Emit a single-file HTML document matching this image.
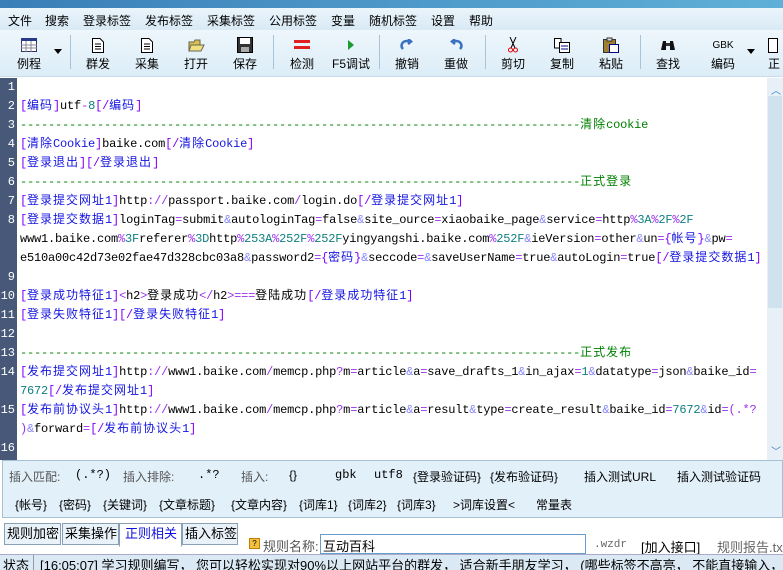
<!DOCTYPE html>
<html><head><meta charset="utf-8"><style>
*{margin:0;padding:0;box-sizing:border-box}
body{width:783px;height:570px;overflow:hidden;background:#fff;font-family:"Liberation Sans","Noto Sans CJK SC",sans-serif;font-size:12px;position:relative}
.title{position:absolute;left:0;top:0;width:783px;height:8px;background:linear-gradient(90deg,#3a7fb8,#5fb0d8)}
.menu{position:absolute;left:0;top:8px;width:783px;height:22px;background:linear-gradient(#eaf4fb,#d9eaf5);font-size:12px}
.menu span{position:absolute;top:4px}
.tb{position:absolute;left:0;top:30px;width:783px;height:47px;background:linear-gradient(#eef6fc,#dcedf7);border-bottom:1px solid #c8dceb}
.btn{position:absolute;top:7px;text-align:center;font-size:12px;width:40px}
.btn .ic{height:16px;margin:0 auto 2px;display:flex;justify-content:center;align-items:center}
.sep{position:absolute;top:5px;width:1px;height:34px;background:#a9c4da}
.gut{position:absolute;left:0;top:78px;width:17px;height:382px;background:#485878}
.ln{position:absolute;right:2px;color:#fff;font-family:"Liberation Mono",monospace;font-size:12px;height:19px;line-height:19px}
.ed{position:absolute;left:20px;top:78px;font-family:"Liberation Mono","Noto Sans CJK SC",monospace;font-size:12px;letter-spacing:-0.2px}
.row{position:absolute;left:0;height:19px;line-height:19px;white-space:pre}
i{font-style:normal;letter-spacing:1px}
.b{color:#8000ff}.t{color:#1515e0}.o{color:#9a30f0}.a{color:#8888ff}.n{color:#108080}.g{color:#008000}
.sb{position:absolute;left:767px;top:78px;width:16px;height:382px;background:#e6f0f6}
.panel{position:absolute;left:2px;top:460px;width:781px;height:58px;background:#e2f0fa;border:1px solid #a8c0d4}
.panel span{position:absolute;font-size:12px}
.tab{position:absolute;top:523px;height:22px;border:1px solid #8aa0b4;background:#e8f2f8;font-size:13px;padding:2px 2px;line-height:16px;white-space:nowrap;overflow:hidden}
.status{position:absolute;left:0;top:554px;width:783px;height:16px;background:#dbe9f4;border-top:1px solid #aac;font-size:13px;white-space:nowrap;overflow:hidden}
</style></head><body>
<div class="title"></div>
<div class="menu">
<span style="left:8px">文件</span><span style="left:45px">搜索</span><span style="left:83px">登录标签</span><span style="left:145px">发布标签</span><span style="left:207px">采集标签</span><span style="left:269px">公用标签</span><span style="left:331px">变量</span><span style="left:369px">随机标签</span><span style="left:431px">设置</span><span style="left:469px">帮助</span>
</div>
<div class="tb">
<div class="btn" style="left:9px"><div class="ic"><svg width="16" height="14"><rect x="0.5" y="0.5" width="15" height="13" fill="#fff" stroke="#336"/><rect x="0" y="0" width="16" height="3" fill="#2a3a8a"/><path d="M0 7H16M0 10H16M5 3V14M10 3V14" stroke="#889"/></svg></div>例程</div>
<div style="position:absolute;left:54px;top:19px;border:4px solid transparent;border-top:5px solid #000"></div>
<div class="sep" style="left:70px"></div>
<div class="btn" style="left:78px"><div class="ic"><svg width="12" height="15"><path d="M.5 .5H8L11.5 4V14.5H.5Z" fill="#fff" stroke="#000"/><path d="M3 6H9M3 8.5H9M3 11H9" stroke="#000"/></svg></div>群发</div>
<div class="btn" style="left:127px"><div class="ic"><svg width="12" height="15"><path d="M.5 .5H8L11.5 4V14.5H.5Z" fill="#fff" stroke="#000"/><path d="M3 6H9M3 8.5H9M3 11H9" stroke="#000"/></svg></div>采集</div>
<div class="btn" style="left:176px"><div class="ic"><svg width="17" height="14"><path d="M1 4H6L7 2H12V13H1Z" fill="#d8c050" stroke="#665"/><path d="M3 7H16L13 13H1Z" fill="#f0e080" stroke="#665"/></svg></div>打开</div>
<div class="btn" style="left:225px"><div class="ic"><svg width="16" height="16"><rect x=".5" y=".5" width="15" height="15" fill="#333" stroke="#000"/><rect x="3" y="1" width="10" height="6" fill="#fff"/><rect x="4" y="10" width="8" height="5" fill="#aaa"/></svg></div>保存</div>
<div class="sep" style="left:273px"></div>
<div class="btn" style="left:282px"><div class="ic"><svg width="16" height="12"><rect y="1" width="16" height="3" fill="#e02020"/><rect y="7" width="16" height="3" fill="#e02020"/></svg></div>检测</div>
<div class="btn" style="left:331px"><div class="ic"><svg width="8" height="12"><path d="M1 1L7 6L1 11Z" fill="#1a9a30"/></svg></div>F5调试</div>
<div class="sep" style="left:379px"></div>
<div class="btn" style="left:387px"><div class="ic"><svg width="14" height="12"><path d="M3 10C0 7 2 2 7 2H10M8 0L11 2.5L8 5" fill="none" stroke="#3a70c0" stroke-width="2.5"/></svg></div>撤销</div>
<div class="btn" style="left:436px"><div class="ic"><svg width="14" height="12"><path d="M11 10C14 7 12 2 7 2H4M6 0L3 2.5L6 5" fill="none" stroke="#3a70c0" stroke-width="2.5"/></svg></div>重做</div>
<div class="sep" style="left:485px"></div>
<div class="btn" style="left:493px"><div class="ic"><svg width="10" height="16"><path d="M2 0L7 11M8 0L3 11" stroke="#000"/><circle cx="2.5" cy="13" r="2" fill="none" stroke="#d00"/><circle cx="7.5" cy="13" r="2" fill="none" stroke="#d00"/></svg></div>剪切</div>
<div class="btn" style="left:542px"><div class="ic"><svg width="16" height="15"><path d="M.5 .5H7V10H.5Z" fill="#fff" stroke="#000"/><path d="M5.5 4.5H15.5V14.5H5.5Z" fill="#fff" stroke="#000"/><path d="M7 8H14M7 11H14" stroke="#008"/></svg></div>复制</div>
<div class="btn" style="left:591px"><div class="ic"><svg width="16" height="16"><rect x=".5" y="2.5" width="12" height="13" fill="#a08030" stroke="#333"/><rect x="4" y="1" width="5" height="3" fill="#ddd" stroke="#333"/><rect x="6.5" y="7.5" width="9" height="8" fill="#fff" stroke="#008"/></svg></div>粘贴</div>
<div class="sep" style="left:640px"></div>
<div class="btn" style="left:648px"><div class="ic"><svg width="16" height="12"><path d="M1 11L3 2H6V11ZM15 11L13 2H10V11Z" fill="#111"/><rect x="6" y="4" width="4" height="3" fill="#333"/></svg></div>查找</div>
<div class="btn" style="left:703px"><div class="ic" style="font-size:10px">GBK</div>编码</div>
<div style="position:absolute;left:747px;top:19px;border:4px solid transparent;border-top:5px solid #000"></div>
<div class="btn" style="left:768px;width:20px;text-align:left"><div class="ic" style="justify-content:flex-start"><svg width="10" height="15"><path d="M.5 .5H9.5V14.5H.5Z" fill="#fff" stroke="#000"/></svg></div>正</div>
</div>
<div class="gut">
<div class="ln" style="top:0">1</div><div class="ln" style="top:19px">2</div><div class="ln" style="top:38px">3</div><div class="ln" style="top:57px">4</div><div class="ln" style="top:76px">5</div><div class="ln" style="top:95px">6</div><div class="ln" style="top:114px">7</div><div class="ln" style="top:133px">8</div><div class="ln" style="top:190px">9</div><div class="ln" style="top:209px">10</div><div class="ln" style="top:228px">11</div><div class="ln" style="top:247px">12</div><div class="ln" style="top:266px">13</div><div class="ln" style="top:285px">14</div><div class="ln" style="top:323px">15</div><div class="ln" style="top:361px">16</div>
</div>
<div class="ed">
<div class="row" style="top:19px"><span class="b">[</span><i class="t">编码</i><span class="b">]</span>utf<span class="o">-</span><span class="n">8</span><span class="b">[/</span><i class="t">编码</i><span class="b">]</span></div>
<div class="row g" style="top:38px">--------------------------------------------------------------------------------<i>清除</i>cookie</div>
<div class="row" style="top:57px"><span class="b">[</span><i class="t">清除</i><span class="t">Cookie</span><span class="b">]</span>baike.com<span class="b">[/</span><i class="t">清除</i><span class="t">Cookie</span><span class="b">]</span></div>
<div class="row" style="top:76px"><span class="b">[</span><i class="t">登录退出</i><span class="b">][/</span><i class="t">登录退出</i><span class="b">]</span></div>
<div class="row g" style="top:95px">--------------------------------------------------------------------------------<i>正式登录</i></div>
<div class="row" style="top:114px"><span class="b">[</span><i class="t">登录提交网址</i><span class="t">1</span><span class="b">]</span>http<span class="o">://</span>passport.baike.com<span class="o">/</span>login.do<span class="b">[/</span><i class="t">登录提交网址</i><span class="t">1</span><span class="b">]</span></div>
<div class="row" style="top:133px"><span class="b">[</span><i class="t">登录提交数据</i><span class="t">1</span><span class="b">]</span>loginTag<span class="o">=</span>submit<span class="a">&amp;</span>autologinTag<span class="o">=</span>false<span class="a">&amp;</span>site_ource<span class="o">=</span>xiaobaike_page<span class="a">&amp;</span>service<span class="o">=</span>http<span class="o">%</span><span class="n">3A</span><span class="o">%</span><span class="n">2F</span><span class="o">%</span><span class="n">2F</span></div>
<div class="row" style="top:152px">www1.baike.com<span class="o">%</span><span class="n">3F</span>referer<span class="o">%</span><span class="n">3D</span>http<span class="o">%</span><span class="n">253A</span><span class="o">%</span><span class="n">252F</span><span class="o">%</span><span class="n">252F</span>yingyangshi.baike.com<span class="o">%</span><span class="n">252F</span><span class="a">&amp;</span>ieVersion<span class="o">=</span>other<span class="a">&amp;</span>un<span class="o">=</span><span class="b">{</span><i class="t">帐号</i><span class="b">}</span><span class="a">&amp;</span>pw<span class="o">=</span></div>
<div class="row" style="top:171px">e510a00c42d73e02fae47d328cbc03a8<span class="a">&amp;</span>password2<span class="o">=</span><span class="b">{</span><i class="t">密码</i><span class="b">}</span><span class="a">&amp;</span>seccode<span class="o">=</span><span class="a">&amp;</span>saveUserName<span class="o">=</span>true<span class="a">&amp;</span>autoLogin<span class="o">=</span>true<span class="b">[/</span><i class="t">登录提交数据</i><span class="t">1</span><span class="b">]</span></div>
<div class="row" style="top:209px"><span class="b">[</span><i class="t">登录成功特征</i><span class="t">1</span><span class="b">]</span><span class="o">&lt;</span>h2<span class="o">&gt;</span><i>登录成功</i><span class="o">&lt;/</span>h2<span class="o">&gt;===</span><i>登陆成功</i><span class="b">[/</span><i class="t">登录成功特征</i><span class="t">1</span><span class="b">]</span></div>
<div class="row" style="top:228px"><span class="b">[</span><i class="t">登录失败特征</i><span class="t">1</span><span class="b">][/</span><i class="t">登录失败特征</i><span class="t">1</span><span class="b">]</span></div>
<div class="row g" style="top:266px">--------------------------------------------------------------------------------<i>正式发布</i></div>
<div class="row" style="top:285px"><span class="b">[</span><i class="t">发布提交网址</i><span class="t">1</span><span class="b">]</span>http<span class="o">://</span>www1.baike.com<span class="o">/</span>memcp.php<span class="o">?</span>m<span class="o">=</span>article<span class="a">&amp;</span>a<span class="o">=</span>save_drafts_1<span class="a">&amp;</span>in_ajax<span class="o">=</span><span class="n">1</span><span class="a">&amp;</span>datatype<span class="o">=</span>json<span class="a">&amp;</span>baike_id<span class="o">=</span></div>
<div class="row" style="top:304px"><span class="n">7672</span><span class="b">[/</span><i class="t">发布提交网址</i><span class="t">1</span><span class="b">]</span></div>
<div class="row" style="top:323px"><span class="b">[</span><i class="t">发布前协议头</i><span class="t">1</span><span class="b">]</span>http<span class="o">://</span>www1.baike.com<span class="o">/</span>memcp.php<span class="o">?</span>m<span class="o">=</span>article<span class="a">&amp;</span>a<span class="o">=</span>result<span class="a">&amp;</span>type<span class="o">=</span>create_result<span class="a">&amp;</span>baike_id<span class="o">=</span><span class="n">7672</span><span class="a">&amp;</span>id<span class="o">=(.*?</span></div>
<div class="row" style="top:342px"><span class="o">)</span><span class="a">&amp;</span>forward<span class="o">=</span><span class="b">[/</span><i class="t">发布前协议头</i><span class="t">1</span><span class="b">]</span></div>
</div>
<div class="sb"><div style="position:absolute;left:1px;top:18px;width:14px;height:212px;background:#cfe2ee"></div><div style="position:absolute;left:4px;top:4px;color:#3a80c8;font-size:10px">︿</div><div style="position:absolute;left:4px;top:365px;color:#3a80c8;font-size:10px">﹀</div></div>
<div class="panel">
<span style="left:6px;top:7px;color:#555">插入匹配:</span><span style="left:72px;top:7px;font-family:'Liberation Mono'">(.*?)</span>
<span style="left:120px;top:7px;color:#555">插入排除:</span><span style="left:195px;top:7px;font-family:'Liberation Mono'">.*?</span>
<span style="left:238px;top:7px;color:#555">插入:</span><span style="left:286px;top:7px">{}</span>
<span style="left:332px;top:7px;font-family:'Liberation Mono'">gbk</span><span style="left:371px;top:7px;font-family:'Liberation Mono'">utf8</span>
<span style="left:410px;top:7px">{登录验证码}</span><span style="left:487px;top:7px">{发布验证码}</span>
<span style="left:581px;top:7px">插入测试URL</span><span style="left:674px;top:7px">插入测试验证码</span>
<span style="left:12px;top:35px">{帐号}</span><span style="left:56px;top:35px">{密码}</span><span style="left:100px;top:35px">{关键词}</span><span style="left:156px;top:35px">{文章标题}</span><span style="left:228px;top:35px">{文章内容}</span><span style="left:296px;top:35px">{词库1}</span><span style="left:345px;top:35px">{词库2}</span><span style="left:394px;top:35px">{词库3}</span><span style="left:450px;top:35px">&gt;词库设置&lt;</span><span style="left:533px;top:35px">常量表</span>
</div>
<div class="tab" style="left:4px;width:57px">规则加密</div>
<div class="tab" style="left:62px;width:57px">采集操作</div>
<div class="tab" style="left:119px;width:63px;background:#fff;border-bottom-color:#fff;color:#1010e0;height:24px;padding-left:5px">正则相关</div>
<div class="tab" style="left:182px;width:56px">插入标签</div>
<div style="position:absolute;left:249px;top:538px;width:11px;height:11px;background:#f4c040;border:1px solid #c08000;font-size:8px;line-height:9px;text-align:center">?</div>
<div style="position:absolute;left:263px;top:536px;font-size:13px;color:#555">规则名称:</div>
<div style="position:absolute;left:320px;top:534px;width:266px;height:20px;border:1px solid #6a9ccc;background:#fff;font-size:13px;padding:1px 2px">互动百科</div>
<div style="position:absolute;left:594px;top:539px;font-size:11px;color:#666;font-family:'Liberation Mono'">.wzdr</div>
<div style="position:absolute;left:641px;top:537px;font-size:13px">[加入接口]</div>
<div style="position:absolute;left:717px;top:537px;font-size:13px;color:#666;white-space:nowrap">规则报告.tx</div>
<div class="status"><span style="position:absolute;left:3px;top:0">状态</span><span style="position:absolute;left:33px;top:0;width:1px;height:16px;background:#99a"></span><span style="position:absolute;left:40px;top:0">[16:05:07] 学习规则编写，  您可以轻松实现对90%以上网站平台的群发，  适合新手朋友学习，  (哪些标签不高亮，  不能直接输入，  请发帖告诉我们</span></div>
</body></html>
